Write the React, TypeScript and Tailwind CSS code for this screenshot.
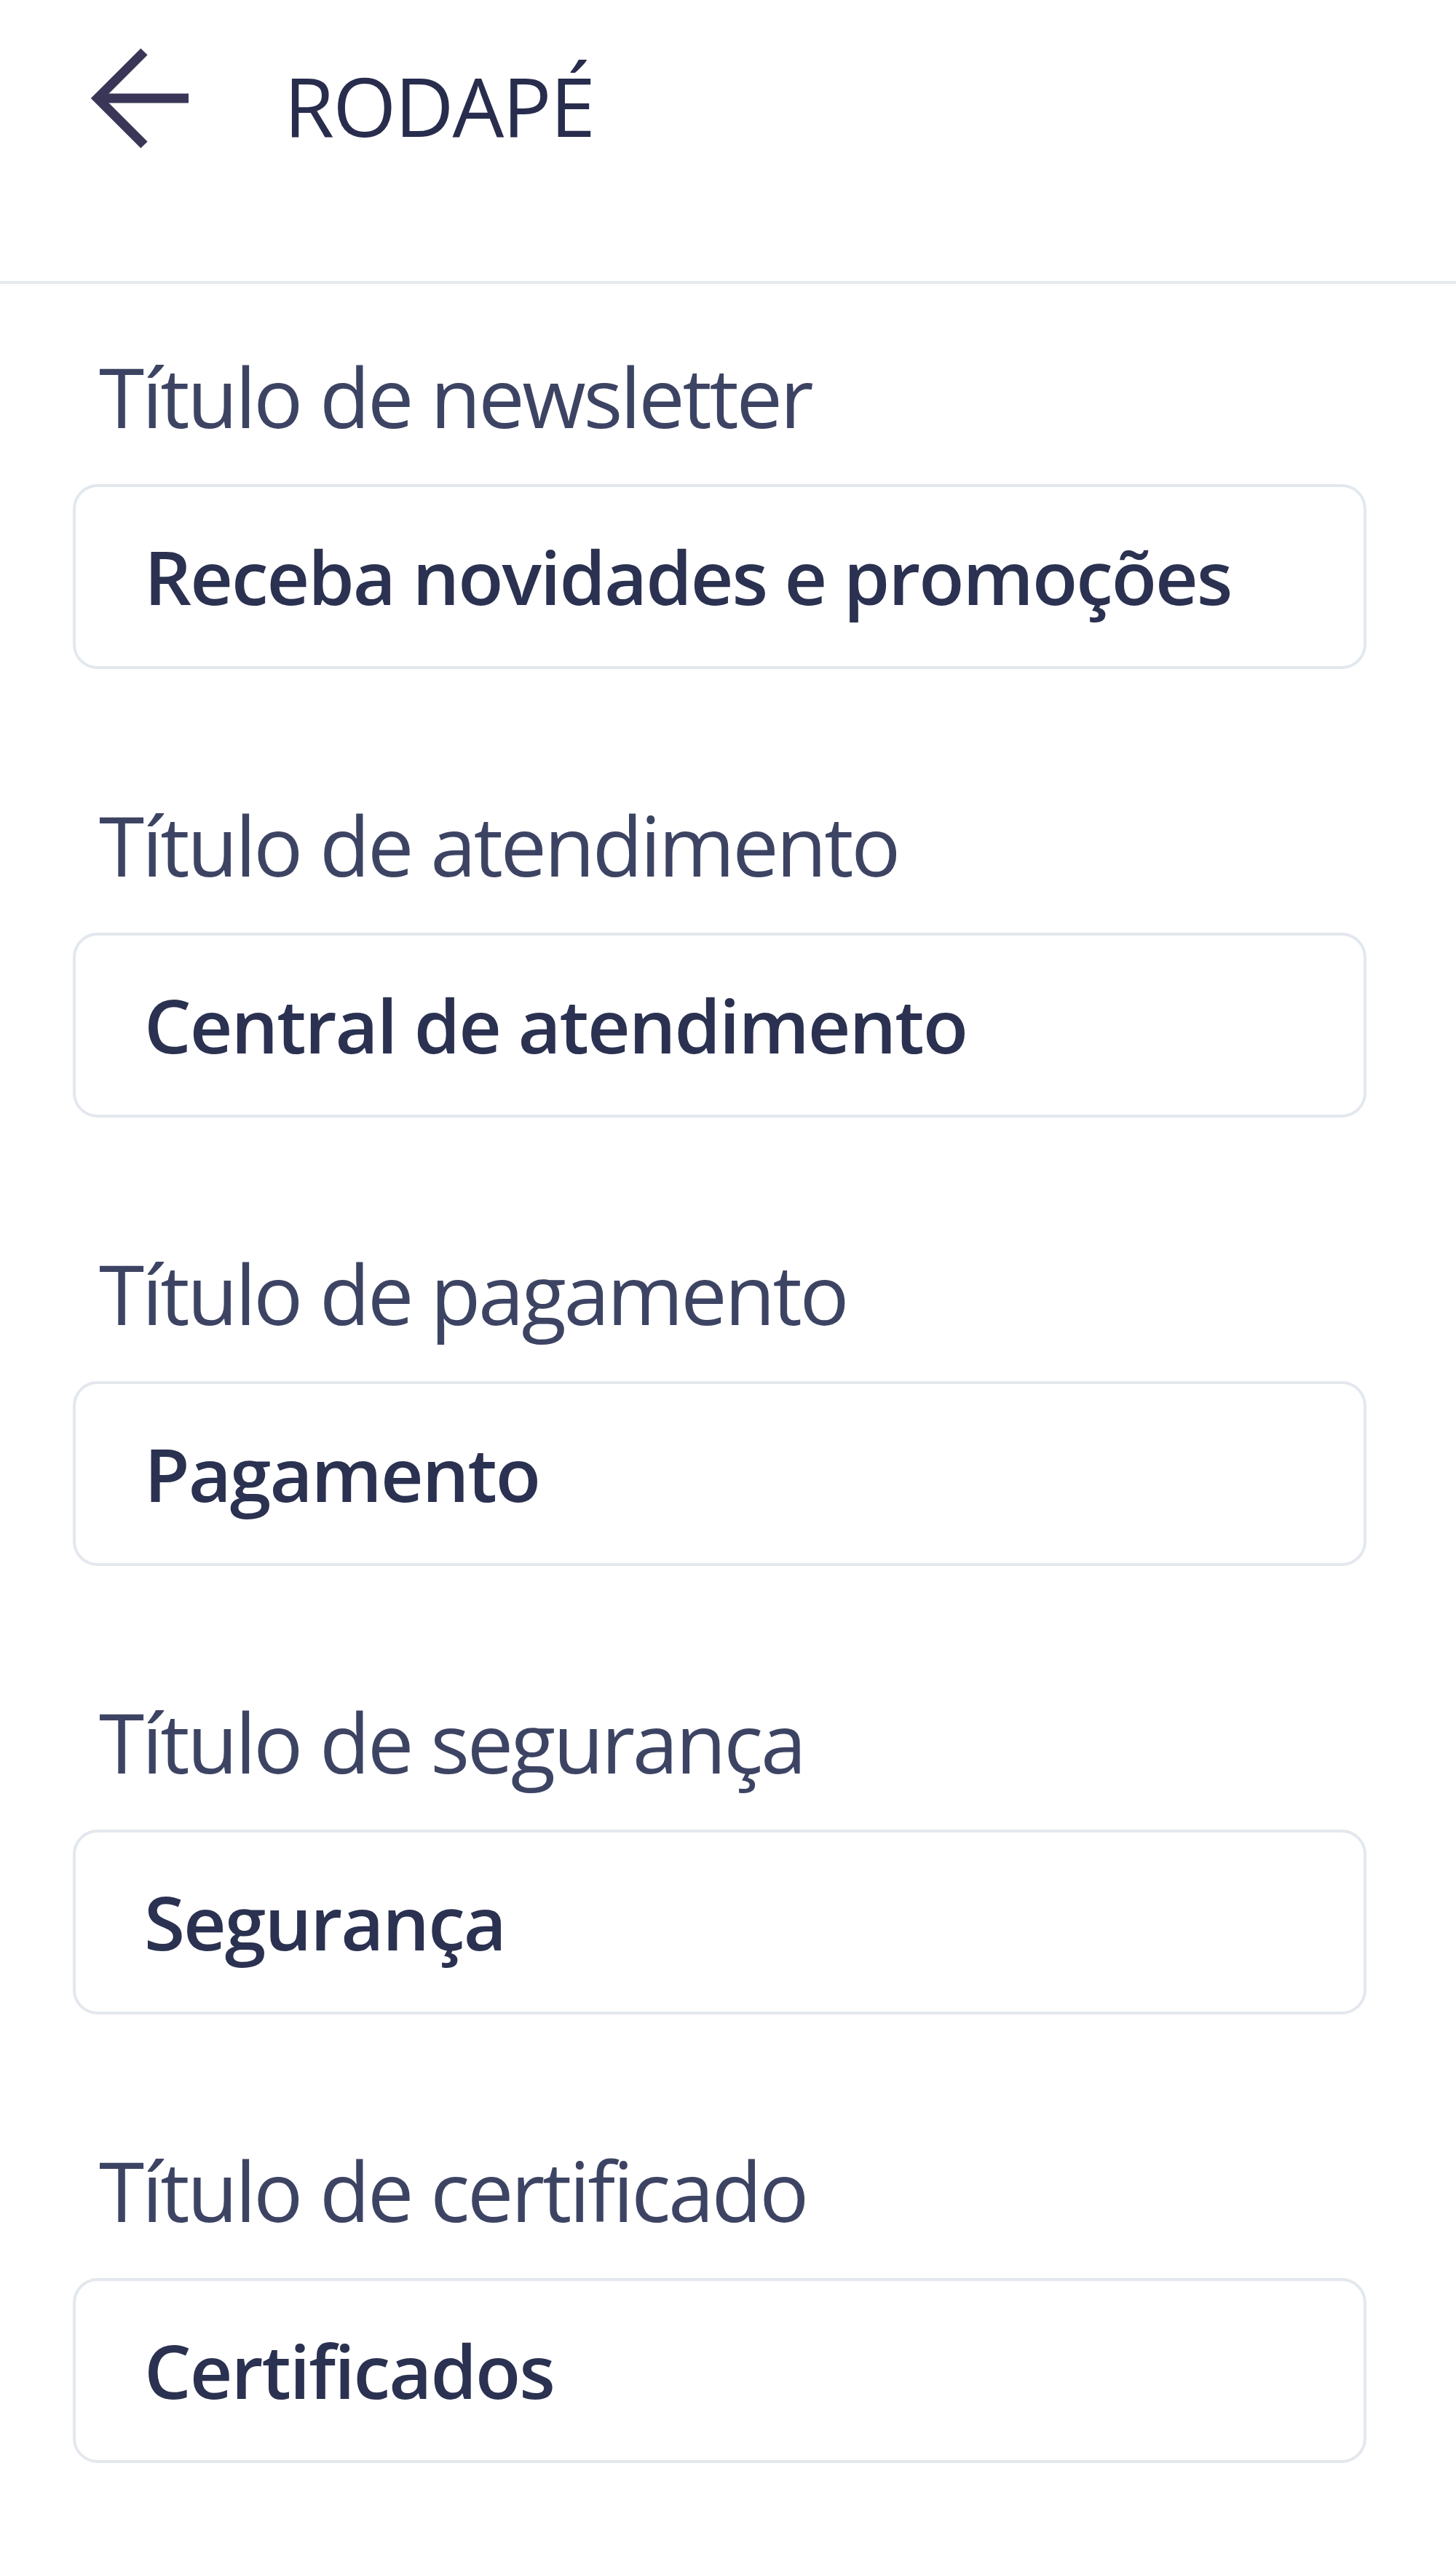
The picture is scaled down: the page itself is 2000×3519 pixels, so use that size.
const fields = [
  { label: "Título de newsletter", value: "Receba novidades e promoções" },
  { label: "Título de atendimento", value: "Central de atendimento" },
  { label: "Título de pagamento", value: "Pagamento" },
  { label: "Título de segurança", value: "Segurança" },
  { label: "Título de certificado", value: "Certificados" },
];

function BackArrow() {
  return (
    <svg width="140" height="140" viewBox="0 0 140 140" fill="none" className="shrink-0">
      <path d="M135 70H12" stroke="#3a3657" strokeWidth="13" />
      <path d="M74 6L10 70L74 134" stroke="#3a3657" strokeWidth="13" strokeLinejoin="miter" />
    </svg>
  );
}

export default function App() {
  return (
    <div className="min-h-screen w-[2000px] bg-white font-['Open_Sans','Noto_Sans',sans-serif]">
      <header className="flex h-[390px] items-center border-b-4 border-[#e6eaf0] pb-[4px] pl-[124px]">
        <div className="-mt-[112px] flex items-center gap-[126px]">
          <BackArrow />
          <h1 className="pt-[20px] text-[112px] leading-[136px] font-normal tracking-[-2px] text-[#282d4d]">RODAPÉ</h1>
        </div>
      </header>
      <main className="flex flex-col gap-[173px] pl-[100px] pr-[123px] pt-[86px]">
        {fields.map((f) => (
          <div key={f.label} className="flex flex-col gap-[53px]">
            <label className="pl-[36px] text-[113px] leading-[136px] tracking-[-3.3px] text-[#3d4463]">{f.label}</label>
            <div className="flex h-[254px] items-center rounded-[34px] border-4 border-[#e3e8ee] bg-white pl-[94px]">
              <span className="text-[102px] leading-[136px] font-semibold tracking-[-2px] text-[#2b3150]">{f.value}</span>
            </div>
          </div>
        ))}
      </main>
    </div>
  );
}
